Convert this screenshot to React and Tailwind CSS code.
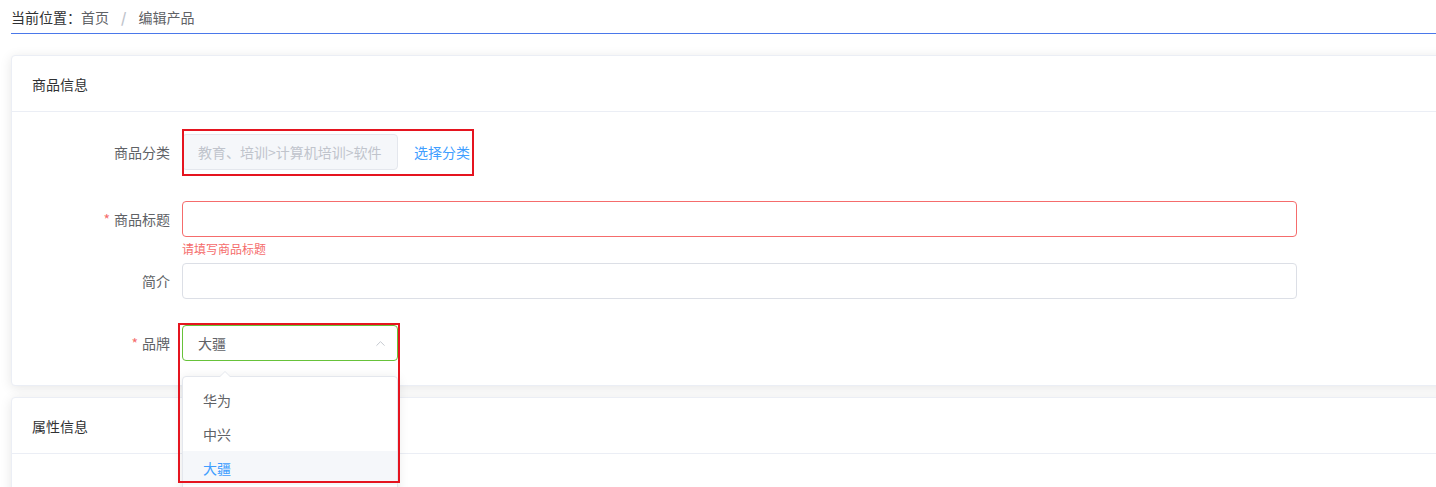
import { ChevronUp } from 'lucide-react';

const font = { fontFamily: '"Noto Sans CJK SC", "Liberation Sans", sans-serif' };

const brands = ['华为', '中兴', '大疆'];

const Label = ({ children, required }) => (
  <div className="w-[150px] shrink-0 pr-3 flex items-center justify-end text-sm text-[#606266]">
    {required && <span className="text-[#f56c6c] mr-1">*</span>}
    {children}
  </div>
);

const Card = ({ title, children, className = '' }) => (
  <div className={`bg-white border border-[#ebeef5] rounded-[4px] shadow-[0_2px_12px_0_rgba(0,0,0,0.1)] ${className}`}>
    <div className="h-[56px] px-5 flex items-center border-b border-[#ebeef5] text-sm text-[#303133]">{title}</div>
    {children}
  </div>
);

export default function App() {
  const selected = '大疆';

  return (
    <div className="relative w-[1436px] h-[487px] overflow-hidden bg-white pl-[11px]" style={font}>
      <div className="w-[1470px]">
        {/* breadcrumb */}
        <div className="h-[34px] w-[1425px] flex items-center border-b border-[#4a78ea] text-sm">
          <span className="text-[#303133]">当前位置：</span>
          <span className="text-[#606266]">首页</span>
          <span className="mx-[12px] text-[#c0c4cc] font-bold">/</span>
          <span className="text-[#606266]">编辑产品</span>
        </div>

        <Card title="商品信息" className="mt-[21px]">
          <div className="px-5 pt-[22px] pb-[24px]">
            <div className="flex h-9">
              <Label>商品分类</Label>
              <div className="w-[216px] h-9 flex items-center px-[15px] bg-[#f5f7fa] border border-[#e4e7ed] rounded-[4px] text-sm text-[#c0c4cc]">
                教育、培训&gt;计算机培训&gt;软件
              </div>
              <button className="ml-4 text-sm text-[#409eff]">选择分类</button>
            </div>

            <div className="flex h-9 mt-[31px]">
              <Label required>商品标题</Label>
              <div className="w-[1115px] h-9 border border-[#f56c6c] rounded-[4px]" />
            </div>
            <div className="h-[26px] pl-[150px] pt-[6px] text-xs leading-[12px] text-[#f56c6c]">请填写商品标题</div>

            <div className="flex h-9">
              <Label>简介</Label>
              <div className="w-[1115px] h-9 border border-[#dcdfe6] rounded-[4px]" />
            </div>

            <div className="flex h-9 mt-[26px]">
              <Label required>品牌</Label>
              <div className="relative w-[216px]">
                <div className="h-9 flex items-center justify-between pl-[15px] pr-[9px] border border-[#67c23a] rounded-[4px] text-sm text-[#606266]">
                  <span>{selected}</span>
                  <ChevronUp className="w-[15px] h-[15px] text-[#c0c4cc]" strokeWidth={1.5} />
                </div>
                {/* dropdown */}
                <div className="absolute left-0 top-[51px] z-10 w-[216px] bg-white border border-[#e4e7ed] rounded-[4px] shadow-[0_2px_12px_0_rgba(0,0,0,0.1)] py-[6px]">
                  <div className="absolute -top-[6px] left-[36px] w-0 h-0 border-x-[6px] border-x-transparent border-b-[6px] border-b-[#e4e7ed]" />
                  <div className="absolute -top-[5px] left-[37px] w-0 h-0 border-x-[5px] border-x-transparent border-b-[5px] border-b-white" />
                  {brands.map((b) => (
                    <div
                      key={b}
                      className={`h-[34px] px-5 flex items-center text-sm ${b === selected ? 'bg-[#f5f7fa] text-[#409eff]' : 'text-[#606266]'}`}
                    >
                      {b}
                    </div>
                  ))}
                </div>
              </div>
            </div>
          </div>
        </Card>

        <Card title="属性信息" className="mt-[11px] h-[200px]" />
      </div>

      {/* annotation boxes */}
      <div className="absolute left-[182px] top-[129px] w-[292px] h-[47px] border-2 border-[#e5141f] pointer-events-none z-20" />
      <div className="absolute left-[178px] top-[323px] w-[222px] h-[160px] border-2 border-[#e5141f] pointer-events-none z-20" />
    </div>
  );
}
